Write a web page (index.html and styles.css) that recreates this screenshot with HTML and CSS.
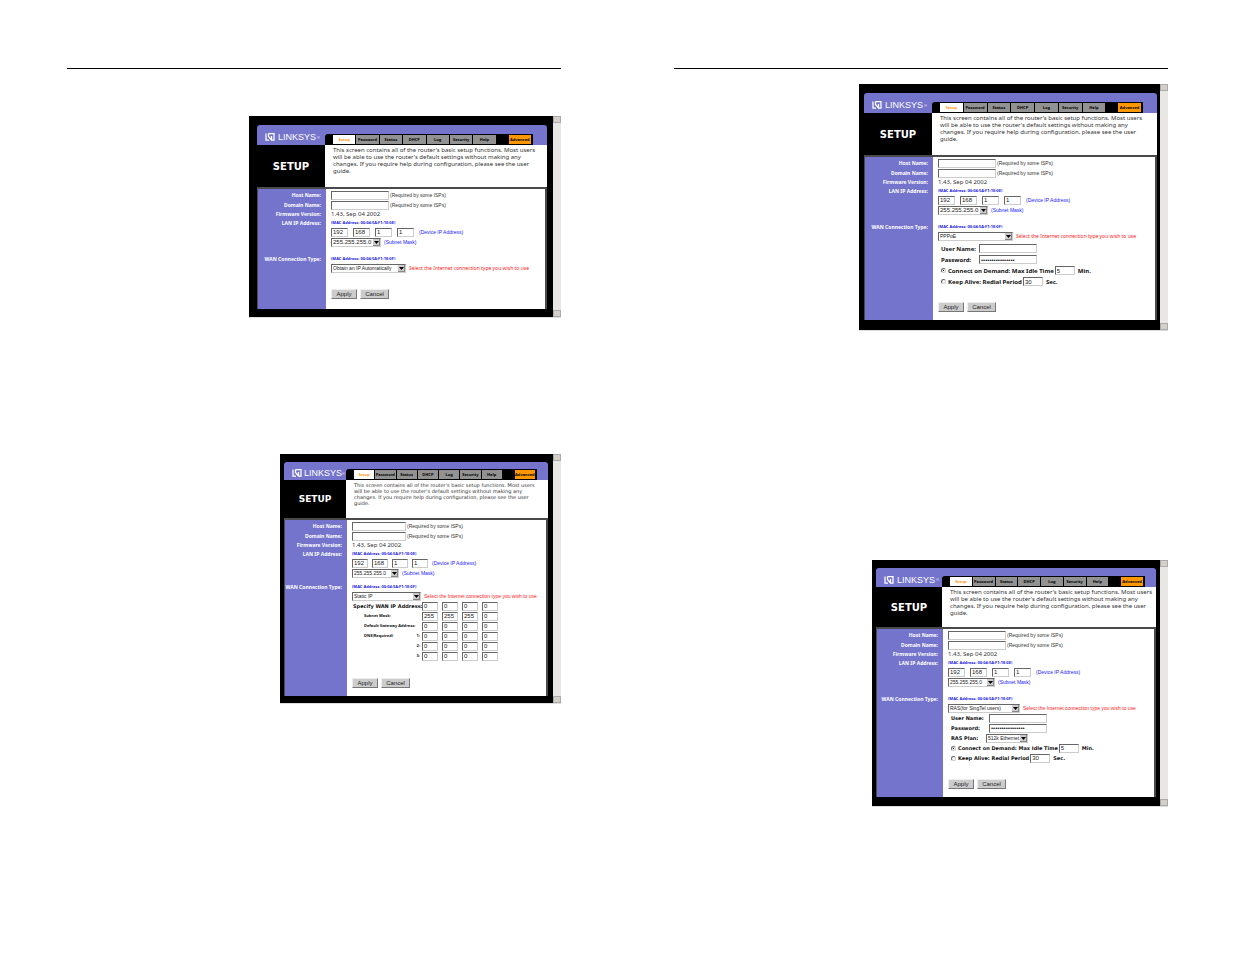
FILE: index.html
```
<!DOCTYPE html>
<html lang="en">
<head>
    <meta charset="UTF-8">
    <meta name="viewport" content="width=device-width, initial-scale=1.0">
    <title>Router Setup Guide</title>
    <link rel="stylesheet" href="styles.css">
</head>
<body>
    <svg width="0" height="0" class="symbols" aria-hidden="true">
        <symbol id="logo-mark" viewBox="0 0 20 16">
            <path d="M2 1v13h6M7 1h11v13h-6M7 1v6l6 7M13 6v8" fill="none" stroke="#fff" stroke-width="2.500"/>
        </symbol>
    </svg>

    <main class="spread">
        <section class="sheet" id="sheet-left"></section>
        <section class="sheet" id="sheet-right"></section>
    </main>

    <script>
        const tabs = ["Password", "Status", "DHCP", "Log", "Security", "Help"];

        // One row of four address boxes
        function octets(values, label) {
            return values.map((v, i) =>
                `<input class="octet" type="text" value="${v}" aria-label="${label} ${i + 1}">`).join("");
        }

        function credentials(id) {
            return `
                <div class="line indent"><label class="strong name" for="${id}-user">User Name:</label>
                    <input class="text" type="text" id="${id}-user"></div>
                <div class="line indent"><label class="strong name" for="${id}-pass">Password:</label>
                    <input class="text" type="password" id="${id}-pass" value="****************"></div>`;
        }

        function connection(id) {
            return `
                <div class="line indent"><input type="radio" name="${id}-mode" id="${id}-demand" checked>
                    <label class="strong" for="${id}-demand">Connect on Demand: Max Idle Time</label>
                    <input class="time" type="text" value="5" aria-label="Max Idle Time"><span class="strong">Min.</span></div>
                <div class="line indent"><input type="radio" name="${id}-mode" id="${id}-alive">
                    <label class="strong" for="${id}-alive">Keep Alive: Redial Period</label>
                    <input class="time" type="text" value="30" aria-label="Redial Period"><span class="strong">Sec.</span></div>`;
        }

        function staticRow(label, values, type = "") {
            return `<div class="line"><span class="strong static-label ${type}">${label}</span>${octets(values, label.replace(/<[^>]*>/g, ""))}</div>`;
        }

        const zero = [0, 0, 0, 0];
        const staticFields =
            staticRow("Specify WAN IP Address:", zero) +
            staticRow("<span>Subnet Mask:</span>", [255, 255, 255, 0], "minor") +
            staticRow("<span>Default Gateway Address:</span>", zero, "minor") +
            staticRow("<span>DNS(Required)</span><span>1:</span>", zero, "minor") +
            staticRow("<span></span><span>2:</span>", zero, "minor") +
            staticRow("<span></span><span>3:</span>", zero, "minor");

        const rasPlan = `
            <div class="line indent"><label class="strong name" for="ras-plan">RAS Plan:</label>
                <select class="plan" id="ras-plan"><option>512k Ethernet</option></select></div>`;

        function screen(id, type, extra) {
            return `
            <form class="figure ${id}" onsubmit="return false">
                <div class="screen">
                    <header class="top">
                        <div class="logo"><svg><use href="#logo-mark"/></svg><span>LINKSYS</span><sup>®</sup></div>
                        <nav>
                            <a class="active" href="#">Setup</a>
                            ${tabs.map(t => `<a href="#">${t}</a>`).join("")}
                            <a class="advanced" href="#">Advanced</a>
                        </nav>
                    </header>
                    <div class="intro">
                        <h2>SETUP</h2>
                        <p>This screen contains all of the router's basic setup functions. Most users<br>
                        will be able to use the router's default settings without making any<br>
                        changes. If you require help during configuration, please see the user<br>
                        guide.</p>
                    </div>
                    <div class="settings">
                        <div class="row first">
                            <label for="${id}-host">Host Name:</label>
                            <div class="line"><input class="text" type="text" id="${id}-host"><small>(Required by some ISPs)</small></div>
                        </div>
                        <div class="row">
                            <label for="${id}-domain">Domain Name:</label>
                            <div class="line"><input class="text" type="text" id="${id}-domain"><small>(Required by some ISPs)</small></div>
                        </div>
                        <div class="row firmware">
                            <span class="title">Firmware Version:</span>
                            <div>1.43, Sep 04 2002</div>
                        </div>
                        <div class="row lan">
                            <span class="title">LAN IP Address:</span>
                            <div>
                                <div class="mac">(MAC Address: 00:04:5A:F1:1E:0E)</div>
                                <div class="line">${octets([192, 168, 1, 1], "Device IP")}<span class="hint">(Device IP Address)</span></div>
                                <div class="line"><select class="mask" aria-label="Subnet Mask"><option>255.255.255.0</option></select><span class="hint">(Subnet Mask)</span></div>
                            </div>
                        </div>
                        <div class="row wan">
                            <label for="${id}-type">WAN Connection Type:</label>
                            <div>
                                <div class="mac">(MAC Address: 00:04:5A:F1:1E:0F)</div>
                                <div class="line"><select class="type" id="${id}-type"><option>${type}</option></select><span class="note">Select the Internet connection type you wish to use</span></div>
                                <div class="extra">${extra}</div>
                                <div class="buttons"><button type="submit">Apply</button><button type="reset">Cancel</button></div>
                            </div>
                        </div>
                    </div>
                </div>
                <div class="scrollbar"><i></i><i></i></div>
            </form>`;
        }

        document.getElementById("sheet-left").innerHTML =
            screen("auto", "Obtain an IP Automatically", "") +
            screen("static", "Static IP", staticFields);
        document.getElementById("sheet-right").innerHTML =
            screen("pppoe", "PPPoE", credentials("pppoe") + connection("pppoe")) +
            screen("ras", "RAS(for SingTel users)", credentials("ras") + rasPlan + connection("ras"));
    </script>
</body>
</html>
```
FILE: styles.css
```
* {
    box-sizing: border-box;
}

body {
    margin: 0;
    background: #fff;
    color: #333;
    font-family: "DejaVu Sans", Verdana, sans-serif;
    font-size: 5px;
}

.symbols {
    position: absolute;
}

.spread {
    display: grid;
    grid-template-columns: 1fr 1fr;
    gap: 113px;
    padding: 68px 67px;
}

.sheet {
    border-top: 1px solid #000;
}

/* one captured browser window */
.figure {
    --side: 68px;
    --octet-gap: 5px;
    --row: 10px;
    --lan-gap: 8px;
    --extra-gap: 0px;
    --frame: 9px 6px 8px 8px;
    --header: 20px;
    --intro: 42px;
    --type: 75px;
    --buttons: 16px;
    display: flex;
    width: 312px;
    margin: 47px 0 0 auto;
    border-bottom: 1px solid #ddd;
    white-space: nowrap;
}

.figure.static {
    --side: 62px;
    --octet-gap: 4px;
    --lan-gap: 5px;
    --frame: 8px 5px 7px 4px;
    --header: 18px;
    --intro: 38px;
    --type: 69px;
    --buttons: 17px;
    width: 281px;
    margin-top: 136px;
}

.figure.pppoe {
    --row: 11px;
    --extra-gap: 2px;
    --frame: 9px 3px 10px 5px;
    --buttons: 15px;
    width: 309px;
    margin-top: 15px;
}

.figure.ras {
    --side: 66px;
    --frame: 8px 4px 9px 4px;
    --header: 19px;
    --intro: 40px;
    --type: 72px;
    width: 296px;
    margin-top: 229px;
}

.screen {
    flex: 1;
    min-width: 0;
    padding: var(--frame);
    background: #000;
}

.scrollbar {
    display: flex;
    flex-direction: column;
    justify-content: space-between;
    width: 8px;
    background: #e9e7e4;
}

.scrollbar i {
    height: 7px;
    border: 1px solid #aaa;
    background: #d4d0c8;
}

.top {
    display: grid;
    grid-template-columns: var(--side) 1fr;
    height: var(--header);
    border-radius: 3px 3px 0 0;
    background: #7474cc;
}

.logo {
    display: flex;
    align-items: center;
    gap: 3px;
    padding: 4px 0 0 8px;
    color: #fff;
    font-size: 9px;
    font-family: "Liberation Sans", Arial, sans-serif;
}

.static .logo {
    gap: 2px;
}

.logo svg {
    flex: none;
    width: 10px;
    height: 8px;
}

.logo sup {
    margin-left: -2px;
    font-size: 4px;
}

nav {
    display: flex;
    align-self: end;
    gap: 1px;
    height: 11px;
    margin-right: 14px;
    padding: 1px 2px 1px 8px;
    border-radius: 3px 0 0 0;
    background: #000;
}

.static nav,
.ras nav {
    margin-right: 11px;
}

nav a {
    flex: 1 1 0;
    min-width: 0;
    background: #929292;
    color: #000;
    font-family: "Noto Sans", sans-serif;
    font-size: 4px;
    font-weight: bold;
    line-height: 9px;
    text-align: center;
    text-decoration: none;
}

nav a.active {
    background: #fff;
    color: #ff9c20;
}

nav a.advanced {
    margin-left: 12px;
    background: #ff9800;
}

.intro {
    display: grid;
    grid-template-columns: var(--side) 1fr;
    height: var(--intro);
    background: #fff;
}

.intro h2 {
    display: flex;
    align-items: center;
    justify-content: center;
    margin: 0;
    background: #000;
    color: #fff;
    font-size: 10px;
}

.static h2 {
    font-size: 9px;
}

.intro p {
    margin: 0;
    padding: 2px 0 0 8px;
    font-family: "Noto Sans", sans-serif;
    font-size: 6px;
    line-height: 7px;
}

.static .intro p {
    font-family: "DejaVu Sans", Verdana, sans-serif;
    font-size: 5px;
    line-height: 6px;
}

.settings {
    border: solid #4a4a4a;
    border-width: 2px 2px 0 1px;
    background: #fff;
}

.row {
    display: grid;
    grid-template-columns: var(--side) 1fr;
    line-height: 10px;
}

.row > label,
.row > .title {
    padding-right: 5px;
    background: #7474cc;
    color: #fff;
    font-weight: bold;
    font-size: 5px;
    font-family: "Noto Sans", sans-serif;
    text-align: right;
}

.row > div {
    padding-left: 5px;
}

.row.first > * {
    padding-top: 1px;
}

.row.firmware {
    line-height: 9px;
}

.firmware > div {
    font-family: "Noto Sans", sans-serif;
    font-size: 6px;
}

.lan,
.wan {
    line-height: 8px;
}

.lan > div {
    padding-bottom: var(--lan-gap);
}

.wan > div {
    padding-bottom: 8px;
}

.auto .wan > div {
    padding-bottom: 10px;
}

.line {
    display: flex;
    align-items: center;
    height: 10px;
}

.first .line {
    height: 11px;
}

.mac {
    height: 8px;
    color: #2020e0;
    font-family: "Noto Sans", sans-serif;
    font-size: 4px;
    font-weight: bold;
}

.hint,
.note {
    margin-left: 3px;
    color: #2020ff;
    font-family: "Liberation Sans", Arial, sans-serif;
}

.octet + .hint {
    margin-left: 0;
}

.note {
    color: #f22;
}

.auto .note,
.pppoe .note {
    font-family: "Noto Sans", sans-serif;
}

small {
    margin-left: 1px;
    font-size: 5px;
    font-family: "Liberation Sans", Arial, sans-serif;
}

.strong {
    color: #111;
    font-weight: bold;
}

.pppoe .strong {
    font-family: "Noto Sans", sans-serif;
    font-size: 6px;
}

input,
select,
button {
    margin: 0;
    padding: 0 1px;
    border: 1px solid #ccc;
    border-top-color: #666;
    border-left-color: #666;
    border-radius: 0;
    background: #fff;
    color: #222;
    font: 6px/7px "Liberation Sans", Arial, sans-serif;
}

.text {
    width: 58px;
    height: 9px;
}

.static .text {
    width: 54px;
}

.octet {
    width: 17px;
    height: 9px;
    margin-right: var(--octet-gap);
}

.static .octet {
    width: 16px;
}

.time {
    width: 20px;
    height: 9px;
    margin: 0 3px 0 1px;
}

select {
    height: 9px;
    appearance: none;
    background: #fff url("data:image/svg+xml,%3Csvg xmlns='http://www.w3.org/2000/svg' viewBox='0 0 7 7'%3E%3Cpath d='M0 0h7v7H0z' fill='%23888'/%3E%3Cpath d='M0 0h6v6H0z' fill='%23ccc'/%3E%3Cpath d='M1 2h5L3.500 5z' fill='%23000'/%3E%3C/svg%3E") right center / 7px 7px no-repeat;
}

.mask {
    width: 50px;
}

.static .mask,
.ras .mask {
    width: 47px;
    font-size: 5px;
}

.type {
    width: var(--type);
    font-size: 5px;
}

.plan {
    width: 42px;
    margin-left: -3px;
    font-size: 5px;
}

.extra {
    padding-top: var(--extra-gap);
}

.extra .line {
    height: var(--row);
}

.indent {
    padding-left: 3px;
}

.name {
    width: 38px;
}

input[type="radio"] {
    appearance: none;
    width: 5px;
    height: 5px;
    margin-right: 2px;
    padding: 0;
    border-radius: 50%;
}

input[type="radio"]:checked {
    background: radial-gradient(#000 35%, #fff 45%);
}

.static-label {
    display: flex;
    justify-content: space-between;
    width: 70px;
    padding-left: 1px;
}

.static-label.minor {
    padding: 0 2px 0 12px;
    font-family: "Noto Sans", sans-serif;
    font-size: 4px;
}

.buttons {
    display: flex;
    gap: 3px;
    padding-top: var(--buttons);
}

button {
    width: 26px;
    height: 10px;
    border-color: #eee #777 #777 #eee;
    background: #ccc;
}

button + button {
    width: 29px;
}
```
